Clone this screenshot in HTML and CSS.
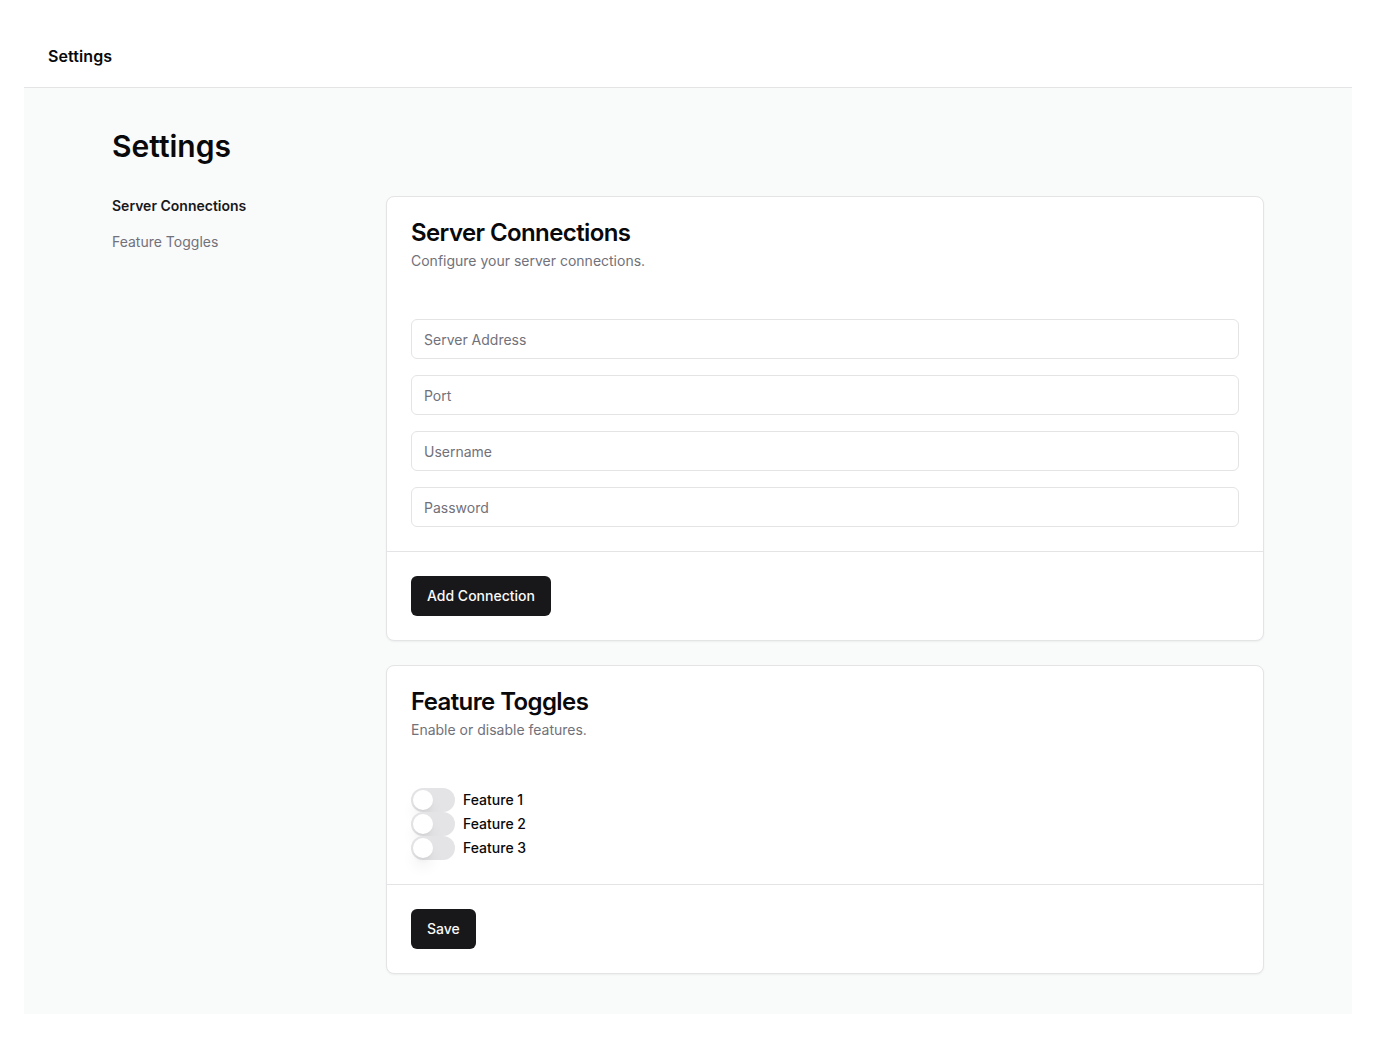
FILE: index.html
```html
<!DOCTYPE html>
<html lang="en">
<head>
<meta charset="utf-8">
<title>Settings</title>
<link rel="stylesheet" href="styles.css">
</head>
<body>
<div class="frame">
  <header class="topbar">
    <span class="brand">Settings</span>
  </header>
  <main class="main">
    <div class="title-wrap">
      <h1 class="page-title">Settings</h1>
    </div>
    <div class="layout">
      <nav class="side-nav">
        <a class="nav-link active" href="#">Server Connections</a>
        <a class="nav-link" href="#">Feature Toggles</a>
      </nav>
      <div class="cards">
        <section class="card">
          <div class="card-header">
            <h3 class="card-title">Server Connections</h3>
            <p class="card-desc">Configure your server connections.</p>
          </div>
          <div class="card-content">
            <form class="form">
              <input class="input" type="text" placeholder="Server Address">
              <input class="input" type="text" placeholder="Port">
              <input class="input" type="text" placeholder="Username">
              <input class="input" type="password" placeholder="Password">
            </form>
          </div>
          <div class="card-footer">
            <button class="btn" type="button">Add Connection</button>
          </div>
        </section>
        <section class="card">
          <div class="card-header">
            <h3 class="card-title">Feature Toggles</h3>
            <p class="card-desc">Enable or disable features.</p>
          </div>
          <div class="card-content">
            <div class="toggles">
              <label class="toggle-row"><span class="switch"><span class="thumb"></span></span><span class="toggle-label">Feature 1</span></label>
              <label class="toggle-row"><span class="switch"><span class="thumb"></span></span><span class="toggle-label">Feature 2</span></label>
              <label class="toggle-row"><span class="switch"><span class="thumb"></span></span><span class="toggle-label">Feature 3</span></label>
            </div>
          </div>
          <div class="card-footer">
            <button class="btn" type="button">Save</button>
          </div>
        </section>
      </div>
    </div>
  </main>
</div>
</body>
</html>
```

FILE: styles.css
```css
* { box-sizing: border-box; }
html, body { margin: 0; padding: 0; background: #ffffff; }
body {
  font-family: Inter, "Liberation Sans", sans-serif;
  color: #09090b;
  -webkit-font-smoothing: antialiased;
}
.frame {
  padding: 24px;
  min-height: 1038px;
  display: flex;
  flex-direction: column;
}
.topbar {
  height: 64px;
  display: flex;
  align-items: center;
  padding: 0 24px;
  border-bottom: 1px solid #e4e4e7;
  background: #ffffff;
}
.brand {
  font-size: 16px;
  font-weight: 600;
  letter-spacing: 0.1px;
  color: #09090b;
}
.main {
  flex: 1;
  background: #f9fafa;
  padding: 40px 40px 40px;
  display: flex;
  flex-direction: column;
  gap: 32px;
}
.title-wrap {
  width: 100%;
  max-width: 1152px;
  margin: 0 auto;
}
.page-title {
  margin: 0;
  font-size: 30px;
  line-height: 36px;
  font-weight: 600;
}
.layout {
  width: 100%;
  max-width: 1152px;
  margin: 0 auto;
  display: grid;
  grid-template-columns: 250px 1fr;
  gap: 24px;
  align-items: start;
}
.side-nav {
  display: grid;
  gap: 16px;
  font-size: 14px;
  line-height: 20px;
}
.nav-link {
  color: #71717a;
  text-decoration: none;
}
.nav-link.active {
  color: #18181b;
  font-weight: 600;
}
.cards {
  display: grid;
  gap: 24px;
}
.card {
  background: #ffffff;
  border: 1px solid #e4e4e7;
  border-radius: 8px;
  box-shadow: 0 1px 2px rgba(0, 0, 0, 0.05);
}
.card-header {
  padding: 24px;
  display: flex;
  flex-direction: column;
  gap: 6px;
}
.card-title {
  margin: 0;
  font-size: 24px;
  line-height: 24px;
  font-weight: 600;
  letter-spacing: -0.6px;
}
.card-desc {
  margin: 0;
  font-size: 14px;
  line-height: 20px;
  color: #71717a;
}
.card-content {
  padding: 24px;
}
.form {
  display: flex;
  flex-direction: column;
  gap: 16px;
}
.input {
  height: 40px;
  width: 100%;
  border: 1px solid #e4e4e7;
  border-radius: 6px;
  padding: 0 12px;
  font-family: inherit;
  font-size: 14px;
  color: #09090b;
  background: #ffffff;
  outline: none;
}
.input::placeholder { color: #71717a; }
.card-footer {
  border-top: 1px solid #e4e4e7;
  padding: 24px;
  display: flex;
  align-items: center;
}
.btn {
  height: 40px;
  padding: 0 16px 1px;
  border: none;
  border-radius: 6px;
  background: #18181b;
  color: #fafafa;
  font-family: inherit;
  font-size: 14px;
  font-weight: 500;
  cursor: pointer;
}
.toggles {
  display: flex;
  flex-direction: column;
}
.toggle-row {
  display: flex;
  align-items: center;
  gap: 8px;
  height: 24px;
}
.switch {
  width: 44px;
  height: 24px;
  border-radius: 12px;
  border: 2px solid transparent;
  background: #e4e4e7;
  display: inline-flex;
  align-items: center;
  flex-shrink: 0;
}
.thumb {
  width: 20px;
  height: 20px;
  border-radius: 50%;
  background: #ffffff;
  box-shadow: 0 10px 15px -3px rgba(0, 0, 0, 0.1), 0 4px 6px -4px rgba(0, 0, 0, 0.1);
}
.toggle-label {
  font-size: 14px;
  line-height: 20px;
  padding-bottom: 1px;
  font-weight: 500;
  color: #09090b;
}
```
